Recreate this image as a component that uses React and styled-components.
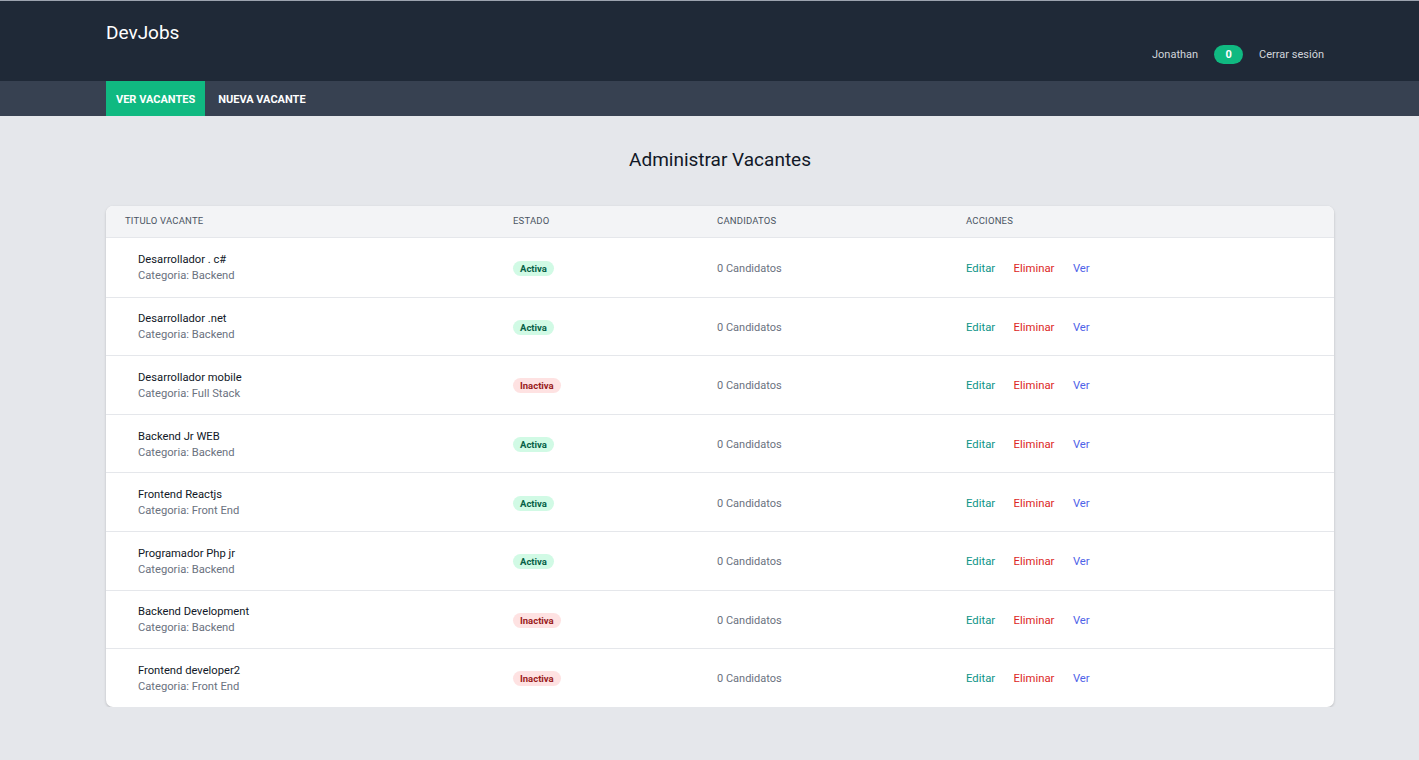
import React from "react";
import styled, { createGlobalStyle } from "styled-components";

const Global = createGlobalStyle`
  html, body { margin: 0; padding: 0; }
  body { background: #e5e7eb; font-family: Roboto, "Noto Sans", sans-serif; }
  * { box-sizing: border-box; }
`;

const Header = styled.header`
  background: #1f2937;
  border-top: 1px solid #9ca3af;
  height: 81px;
`;
const HeaderInner = styled.div`
  width: 1228px;
  margin-left: 106px;
  display: flex;
  justify-content: space-between;
  height: 100%;
`;
const Logo = styled.h1`
  margin: 0;
  padding-top: 20px;
  color: #fff;
  font-size: 19px;
  font-weight: 400;
  line-height: 23px;
`;
const UserBox = styled.div`
  display: flex;
  align-items: center;
  gap: 16px;
  padding-top: 44px;
  padding-right: 10px;
  align-self: flex-start;
  color: #d1d5db;
  font-size: 11px;
`;
const Badge = styled.span`
  background: #10b981;
  color: #fff;
  font-weight: 700;
  font-size: 11px;
  border-radius: 999px;
  width: 29px;
  height: 19px;
  display: inline-flex;
  align-items: center;
  justify-content: center;
`;
const NavBar = styled.nav`
  background: #374151;
  height: 35px;
`;
const NavInner = styled.div`
  margin-left: 106px;
  display: flex;
  height: 100%;
`;
const NavLink = styled.a`
  display: flex;
  align-items: center;
  padding: 1px ${p => (p.$active ? "10px" : "13px")} 0;
  background: ${p => (p.$active ? "#10b981" : "transparent")};
  color: #fff;
  font-size: 11px;
  font-weight: 700;
  text-transform: uppercase;
`;
const Main = styled.main`
  width: 1228px;
  margin-left: 106px;
  padding-top: 33px;
`;
const Title = styled.h2`
  margin: 0 0 35px;
  text-align: center;
  font-size: 19px;
  font-weight: 400;
  color: #111827;
  line-height: 22px;
`;
const Card = styled.div`
  background: #fff;
  border-radius: 7px;
  overflow: hidden;
  box-shadow: 0 1px 3px rgba(0,0,0,0.15), 0 1px 2px rgba(0,0,0,0.06);
`;
const cols = "388px 204px 249px 1fr";
const HeadRow = styled.div`
  display: grid;
  grid-template-columns: ${cols};
  height: 32px;
  align-items: center;
  background: #f3f4f6;
  border-bottom: 1px solid #e5e7eb;
`;
const Th = styled.div`
  padding-left: 19px;
  padding-bottom: 2px;
  font-size: 9.5px;
  text-transform: uppercase;
  color: #4b5563;
  letter-spacing: 0.2px;
`;
const Row = styled.div`
  display: grid;
  grid-template-columns: ${cols};
  height: 58.6px;
  align-items: center;
  padding-top: 2px;
  border-top: ${p => (p.$first ? "none" : "1px solid #e5e7eb")};
`;
const Td = styled.div`
  padding-left: ${p => (p.$first ? "32px" : "19px")};
  font-size: 11px;
  color: #6b7280;
`;
const JobTitle = styled.div`
  font-size: 11.2px;
  color: #111827;
  line-height: 16px;
`;
const JobCat = styled.div`
  font-size: 11.2px;
  color: #6b7280;
  line-height: 16px;
`;
const Status = styled.span`
  display: inline-block;
  padding: 2px 7px;
  border-radius: 999px;
  font-size: 9.5px;
  font-weight: 700;
  background: ${p => (p.$active ? "#d1fae5" : "#fee2e2")};
  color: ${p => (p.$active ? "#065f46" : "#991b1b")};
`;
const Actions = styled.div`
  display: flex;
  gap: 18.5px;
  font-size: 11.3px;
`;
const Action = styled.a`
  color: ${p => p.$color};
  cursor: pointer;
`;

const jobs = [
  ["Desarrollador . c#", "Backend", true],
  ["Desarrollador .net", "Backend", true],
  ["Desarrollador mobile", "Full Stack", false],
  ["Backend Jr WEB", "Backend", true],
  ["Frontend Reactjs", "Front End", true],
  ["Programador Php jr", "Backend", true],
  ["Backend Development", "Backend", false],
  ["Frontend developer2", "Front End", false],
];

export default function App() {
  return (
    <>
      <Global />
      <Header>
        <HeaderInner>
          <Logo>DevJobs</Logo>
          <UserBox>
            <span>Jonathan</span>
            <Badge>0</Badge>
            <span>Cerrar sesión</span>
          </UserBox>
        </HeaderInner>
      </Header>
      <NavBar>
        <NavInner>
          <NavLink $active>Ver vacantes</NavLink>
          <NavLink>Nueva vacante</NavLink>
        </NavInner>
      </NavBar>
      <Main>
        <Title>Administrar Vacantes</Title>
        <Card>
          <HeadRow>
            <Th>Titulo vacante</Th>
            <Th>Estado</Th>
            <Th>Candidatos</Th>
            <Th>Acciones</Th>
          </HeadRow>
          {jobs.map(([t, c, a], i) => (
            <Row key={i} $first={i === 0}>
              <Td $first>
                <JobTitle>{t}</JobTitle>
                <JobCat>Categoria: {c}</JobCat>
              </Td>
              <Td>
                <Status $active={a}>{a ? "Activa" : "Inactiva"}</Status>
              </Td>
              <Td>0 Candidatos</Td>
              <Td>
                <Actions>
                  <Action $color="#0d9488">Editar</Action>
                  <Action $color="#dc2626">Eliminar</Action>
                  <Action $color="#4f63e8">Ver</Action>
                </Actions>
              </Td>
            </Row>
          ))}
        </Card>
      </Main>
    </>
  );
}
